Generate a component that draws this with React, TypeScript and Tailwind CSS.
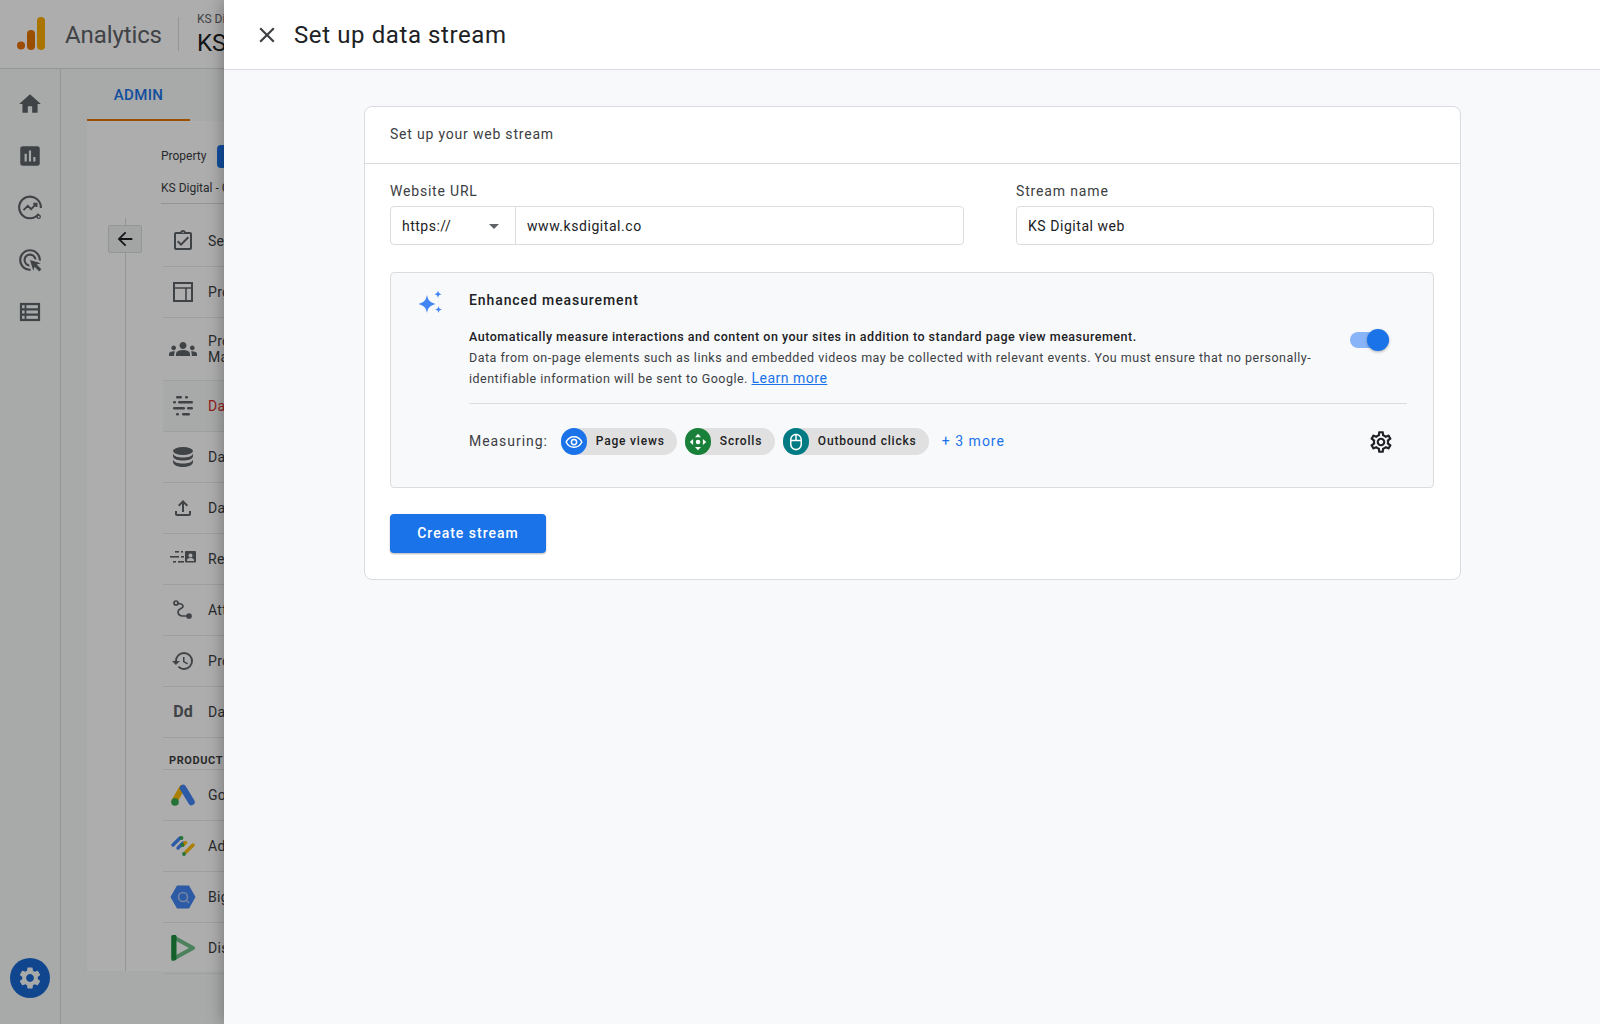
import type { ReactNode } from "react";
import {
  MdHome,
  MdAssessment,
  MdAdsClick,
  MdSettings,
  MdOutlineAssignmentTurnedIn,
  MdGroups,
  MdOutlineFileUpload,
  MdHistory,
  MdArrowBack,
  MdClose,
  MdArrowDropDown,
  MdOutlineSettings,
  MdOutlineMouse,
} from "react-icons/md";

const AnalyticsLogo = () => (
  <svg width="30" height="34" viewBox="0 0 30 34">
    <circle cx="5" cy="28.500" r="4" fill="#E8710A" />
    <rect x="11" y="13" width="8" height="20" rx="4" fill="#E37400" />
    <rect x="21" y="0" width="8" height="33" rx="4" fill="#F9AB00" />
  </svg>
);

const ExploreIcon = () => (
  <svg width="26" height="26" viewBox="0 0 24 24" fill="none" stroke="#5f6368" strokeWidth="2">
    <path d="M20 17.500A10 10 0 1 1 22 12" />
    <path d="M6 14l4-4 3 3 5-5M15 8h3v3" strokeWidth="1.800" />
    <circle cx="20" cy="20" r="1.500" strokeWidth="1.200" />
  </svg>
);

const TableIcon = () => (
  <svg width="26" height="26" viewBox="0 0 26 26" fill="none" stroke="#5f6368" strokeWidth="2.200">
    <rect x="4" y="5" width="18" height="16" />
    <path d="M4 10.300h18M4 15.600h18" />
    <path d="M8.500 5v16" strokeWidth="1.800" />
  </svg>
);

const LayoutIcon = () => (
  <svg width="20" height="20" viewBox="0 0 20 20" fill="none" stroke="#5f6368" strokeWidth="2">
    <rect x="1" y="1" width="18" height="18" />
    <path d="M1 6h18M13 6v13" strokeWidth="1.600" />
  </svg>
);

const StreamsIcon = () => (
  <svg width="20" height="20" viewBox="0 0 20 20" fill="#5f6368">
    <rect x="3" y="0" width="6" height="2.600" rx="1.300" />
    <rect x="12" y="0" width="3" height="2.600" rx="1.300" />
    <rect x="0" y="5" width="3" height="2.600" rx="1.300" />
    <rect x="5" y="5" width="15" height="2.600" rx="1.300" />
    <rect x="0" y="11" width="12" height="2.600" rx="1.300" />
    <rect x="14" y="11" width="6" height="2.600" rx="1.300" />
    <rect x="3" y="17" width="3" height="2.600" rx="1.300" />
    <rect x="9" y="17" width="8" height="2.600" rx="1.300" />
  </svg>
);

const DatabaseIcon = () => (
  <svg width="20" height="20" viewBox="0 0 20 20" fill="#5f6368">
    <ellipse cx="10" cy="4" rx="10" ry="4" />
    <path d="M0 6.500c1 3 5 4 10 4s9-1 10-4v3c-1 3-5 4-10 4s-9-1-10-4zM0 12.500c1 3 5 4 10 4s9-1 10-4v3c-1 3-5 4.500-10 4.500s-9-1.500-10-4.500z" />
  </svg>
);

const IdentityIcon = () => (
  <svg width="26" height="18" viewBox="0 0 26 18" fill="#5f6368">
    <rect x="5" y="1" width="4" height="1.600" />
    <rect x="11" y="1" width="2" height="1.600" />
    <rect x="0" y="6" width="9" height="1.600" />
    <rect x="11" y="6" width="3" height="1.600" />
    <rect x="3" y="11" width="3" height="1.600" />
    <rect x="8" y="11" width="6" height="1.600" />
    <path
      d="M16 1h9a1 1 0 0 1 1 1v9.500a1 1 0 0 1-1 1h-9a1 1 0 0 1-1-1V2a1 1 0 0 1 1-1zm4.500 2.500a2 2 0 1 0 0 4 2 2 0 0 0 0-4zM17 11h7v-1c0-1.500-2.300-2-3.500-2S17 8.500 17 10z"
      fillRule="evenodd"
    />
  </svg>
);

const AttributionIcon = () => (
  <svg width="20" height="20" viewBox="0 0 20 20" fill="none" stroke="#5f6368" strokeWidth="1.700">
    <circle cx="3" cy="3" r="2" />
    <path d="M5 3.500c4 0 5 1 5 3s-5 2-5 5 2 4.500 5 4.500h4" />
    <circle cx="16" cy="16" r="2" fill="#5f6368" />
  </svg>
);

const AdsLogo = () => (
  <svg width="24" height="22" viewBox="0 0 24 22">
    <path d="M11 4L3.500 17" stroke="#FBBC04" strokeWidth="6" strokeLinecap="round" />
    <path d="M12 4l8.500 14" stroke="#4285F4" strokeWidth="6.500" strokeLinecap="round" />
    <circle cx="4" cy="18" r="3.800" fill="#34A853" />
  </svg>
);

const AdManagerLogo = () => (
  <svg width="24" height="24" viewBox="0 0 24 24" strokeLinecap="round" strokeWidth="3.400">
    <path d="M2 11l7-7" stroke="#4285F4" />
    <path d="M7 14l5-5" stroke="#4285F4" />
    <path d="M12 11l2.500-2.500" stroke="#FBBC04" />
    <path d="M15 18l7-7" stroke="#FBBC04" />
    <circle cx="10.500" cy="4" r="1.900" fill="#34A853" stroke="none" />
    <circle cx="11.500" cy="11" r="1.900" fill="#34A853" stroke="none" />
    <circle cx="13" cy="20" r="1.900" fill="#34A853" stroke="none" />
  </svg>
);

const BigQueryLogo = () => (
  <svg width="26" height="24" viewBox="0 0 26 24">
    <path d="M7 0.500h12l6.500 11.500L19 23.500H7L0.500 12z" fill="#4285F4" />
    <circle cx="13" cy="12" r="4.500" fill="none" stroke="#a9c4f5" strokeWidth="1.600" />
    <path d="M16 15l3 3" stroke="#a9c4f5" strokeWidth="1.600" />
  </svg>
);

const DisplayLogo = () => (
  <svg width="24" height="26" viewBox="0 0 24 26">
    <path d="M2 2l20 11L2 24z" fill="none" stroke="#6fc08a" strokeWidth="4" strokeLinejoin="round" />
    <path d="M3 2v21" stroke="#1E8E3E" strokeWidth="5" strokeLinecap="round" />
  </svg>
);

const Sparkles = () => (
  <svg width="28" height="28" viewBox="0 0 28 28" fill="#4285f4">
    <path d="M10 6c1.100 5.400 2.700 7 8.500 9-5.800 2-7.400 3.600-8.500 9-1.100-5.400-2.700-7-8.500-9 5.800-2 7.400-3.600 8.500-9z" />
    <path d="M21 1.500c.5 2.500 1.200 3.200 3.700 3.700-2.500.5-3.200 1.200-3.700 3.700-.5-2.500-1.200-3.200-3.700-3.700 2.500-.5 3.200-1.200 3.700-3.700z" />
    <path d="M21.500 17c.5 2.400 1.100 3 3.500 3.500-2.400.5-3 1.100-3.500 3.500-.5-2.400-1.100-3-3.500-3.500 2.400-.5 3-1.100 3.500-3.500z" />
  </svg>
);

const EyeIcon = () => (
  <svg width="18" height="18" viewBox="0 0 24 24" fill="none" stroke="white" strokeWidth="2">
    <path d="M1.500 12C4 7 8 5 12 5s8 2 10.500 7C20 17 16 19 12 19s-8-2-10.500-7z" />
    <circle cx="12" cy="12" r="3.500" />
  </svg>
);

const ScrollIcon = () => (
  <svg width="18" height="18" viewBox="0 0 24 24" fill="white">
    <path d="M12 1l4 4.500H8zM12 23l-4-4.500h8zM1 12l4.500-4v8zM23 12l-4.500 4V8z" />
    <circle cx="12" cy="12" r="3" />
  </svg>
);

type NavRow = { icon: ReactNode; label: string; active?: boolean; tall?: boolean };

const rows: NavRow[] = [
  { icon: <MdOutlineAssignmentTurnedIn size={24} color="#5f6368" />, label: "Setup Assistant" },
  { icon: <LayoutIcon />, label: "Property Settings" },
  { icon: <MdGroups size={28} color="#5f6368" />, label: "Property Access Management", tall: true },
  { icon: <StreamsIcon />, label: "Data Streams", active: true },
  { icon: <DatabaseIcon />, label: "Data Settings" },
  { icon: <MdOutlineFileUpload size={24} color="#5f6368" />, label: "Data Import" },
  { icon: <IdentityIcon />, label: "Reporting Identity" },
  { icon: <AttributionIcon />, label: "Attribution Settings" },
  { icon: <MdHistory size={24} color="#5f6368" />, label: "Property Change History" },
  { icon: <span className="text-[16px] font-bold text-[#5f6368]">Dd</span>, label: "Data Deletion Requests" },
];

const links: NavRow[] = [
  { icon: <AdsLogo />, label: "Google Ads Links" },
  { icon: <AdManagerLogo />, label: "Ad Manager Links" },
  { icon: <BigQueryLogo />, label: "BigQuery Links" },
  { icon: <DisplayLogo />, label: "Display & Video 360 Links" },
];

const Row = ({ row }: { row: NavRow }) => (
  <div
    className={`flex items-center border-b border-[#e8eaed] ${row.tall ? "h-[63px]" : "h-[51px]"} ${
      row.active ? "bg-[#f8f9fa]" : ""
    }`}
  >
    <div className="flex w-[45px] shrink-0 justify-center pr-[5px]">{row.icon}</div>
    <span
      className={`text-[14px] leading-[16px] tracking-[0.3px] ${row.tall ? "w-[130px]" : "whitespace-nowrap"} ${
        row.active ? "text-[#d93025]" : "text-[#3c4043]"
      }`}
    >
      {row.label}
    </span>
  </div>
);

const Chip = ({ icon, color, label, width }: { icon: ReactNode; color: string; label: string; width: string }) => (
  <div className={`flex h-[27px] items-center rounded-full bg-[#e0e0e0] ${width}`}>
    <div className={`flex h-[27px] w-[26px] shrink-0 items-center justify-center rounded-full ${color}`}>{icon}</div>
    <span className="mb-[1px] ml-[9px] whitespace-nowrap text-[12px] font-medium tracking-[0.8px] text-[#202124]">
      {label}
    </span>
  </div>
);

const BackgroundPage = () => (
  <div className="relative h-full w-[224px] shrink-0 overflow-hidden bg-[#f8f9fa] font-['Roboto',sans-serif]">
    <div className="flex h-[69px] w-[500px] items-center border-b border-[#dadce0] bg-white pl-[16px]">
      <AnalyticsLogo />
      <span className="ml-[19px] pt-[2px] text-[24px] tracking-[-0.1px] text-[#5f6368]">Analytics</span>
      <div className="ml-[16px] h-[34px] w-px bg-[#dadce0]" />
      <div className="ml-[18px] flex flex-col">
        <span className="text-[12px] leading-[14px] text-[#5f6368]">KS Digital</span>
        <span className="pt-[3px] text-[24px] leading-[28px] text-[#202124]">KS Digital</span>
      </div>
    </div>
    <div className="flex h-[955px]">
      <div className="flex w-[61px] shrink-0 flex-col items-center justify-between border-r border-[#dadce0] pb-[26px] pt-[22px]">
        <div className="flex flex-col items-center gap-[26px]">
          <MdHome size={26} color="#5f6368" />
          <MdAssessment size={26} color="#5f6368" />
          <ExploreIcon />
          <MdAdsClick size={26} color="#5f6368" />
          <TableIcon />
        </div>
        <div className="flex h-[40px] w-[40px] items-center justify-center rounded-full bg-[#1967d2]">
          <MdSettings size={26} color="#f8f9fa" />
        </div>
      </div>
      <div className="pl-[26px]">
        <div className="flex h-[52px] w-[103px] items-center justify-center border-b-2 border-[#e37400] pt-[2px] text-[15px] font-medium tracking-[0.4px] text-[#1a73e8]">
          ADMIN
        </div>
        <div className="relative h-[850px] w-[400px] bg-white pl-[74px]">
          <div className="flex h-[50px] items-center gap-[11px] pt-[20px]">
            <span className="text-[12px] text-[#3c4043]">Property</span>
            <div className="h-[23px] w-[60px] rounded-[4px] bg-[#1a73e8]" />
          </div>
          <div className="flex h-[33px] w-[200px] items-start border-b border-[#dadce0] pt-[8px] text-[12px] text-[#3c4043]">
            KS Digital - GA4
          </div>
          <div className="absolute bottom-0 left-[38px] top-[97px] w-px bg-[#dadce0]" />
          <div className="absolute left-[21px] top-[104px] flex h-[28px] w-[34px] items-center justify-center rounded-[2px] border border-[#dadce0] bg-[#f1f3f4]">
            <MdArrowBack size={22} color="#202124" />
          </div>
          <div className="ml-[2px] mt-[12px] w-[240px]">
            {rows.map((row) => (
              <Row key={row.label} row={row} />
            ))}
            <div className="flex h-[32px] items-end border-b border-[#e8eaed] pl-[6px] text-[11px] font-bold tracking-[0.6px] text-[#3c4043]">
              PRODUCT LINKS
            </div>
            {links.map((row) => (
              <Row key={row.label} row={row} />
            ))}
          </div>
        </div>
      </div>
    </div>
    {/* scrim over the page behind the panel */}
    <div className="absolute inset-0 bg-black/32" />
  </div>
);

export default function App() {
  return (
    <div className="flex h-screen w-full overflow-hidden bg-[#f8f9fa] font-['Roboto',sans-serif]">
      <BackgroundPage />
      <div className="relative z-10 flex min-w-0 flex-1 flex-col bg-[#f8f9fb] shadow-[0_0_16px_rgba(0,0,0,0.35)]">
        <div className="flex h-[70px] shrink-0 items-center border-b border-[#dadce0] bg-white pl-[30px]">
          <MdClose size={26} color="#3c4043" />
          <h1 className="ml-[14px] text-[24px] tracking-[0.6px] text-[#202124]">Set up data stream</h1>
        </div>
        <div className="px-[140px] pt-[36px]">
          <div className="h-[474px] w-[1097px] rounded-[8px] border border-[#dadce0] bg-white">
            <div className="flex h-[57px] items-center border-b border-[#dadce0] px-[25px] pb-[2px] text-[14px] tracking-[0.8px] text-[#3c4043]">
              Set up your web stream
            </div>
            <div className="px-[25px]">
              <div className="mt-[17px] flex gap-[52px]">
                <div className="w-[574px]">
                  <div className="h-[25px] text-[14px] leading-[20px] tracking-[0.8px] text-[#3c4043]">Website URL</div>
                  <div className="flex h-[39px] items-center rounded-[4px] border border-[#dadce0] bg-white text-[14px] text-[#202124]">
                    <div className="flex h-full w-[125px] items-center justify-between border-r border-[#dadce0] pl-[11px] pr-[9px] pt-[1px]">
                      <span className="tracking-[0.5px]">https://</span>
                      <MdArrowDropDown size={24} color="#5f6368" />
                    </div>
                    <span className="ml-[11px] pt-[1px] tracking-[0.55px]">www.ksdigital.co</span>
                  </div>
                </div>
                <div className="w-[418px]">
                  <div className="h-[25px] text-[14px] leading-[20px] tracking-[0.85px] text-[#3c4043]">Stream name</div>
                  <div className="flex h-[39px] items-center rounded-[4px] border border-[#dadce0] bg-white pl-[11px] pt-[1px] text-[14px] tracking-[0.55px] text-[#202124]">
                    KS Digital web
                  </div>
                </div>
              </div>

              <div className="mt-[27px] h-[216px] w-[1044px] rounded-[4px] border border-[#dadce0] bg-[#f8f9fb]">
                <div className="flex">
                  <div className="flex w-[78px] shrink-0 justify-center pl-[2px] pt-[16px]">
                    <Sparkles />
                  </div>
                  <div className="w-[938px]">
                    <div className="flex h-[53px] items-center pt-[2px] text-[14px] font-medium tracking-[0.9px] text-[#202124]">
                      Enhanced measurement
                    </div>
                    <div className="flex justify-between border-b border-[#dadce0] pb-[14px] pr-[18px]">
                      <div className="w-[850px] text-[12.500px] leading-[21px] tracking-[0.5px] text-[#3c4043]">
                        <div className="font-medium text-[#202124]">
                          Automatically measure interactions and content on your sites in addition to standard page view
                          measurement.
                        </div>
                        <div>
                          Data from on-page elements such as links and embedded videos may be collected with relevant
                          events. You must ensure that no personally-identifiable information will be sent to Google.{" "}
                          <span className="text-[14px] leading-[16px] text-[#1a73e8] underline">Learn more</span>
                        </div>
                      </div>
                      <div className="relative mt-[6px] h-[16px] w-[39px] rounded-full bg-[#8ab4f8]">
                        <div className="absolute -top-[3px] right-0 h-[22px] w-[22px] rounded-full bg-[#1a73e8] shadow-[0_1px_3px_rgba(0,0,0,0.3)]" />
                      </div>
                    </div>
                    <div className="flex h-[75px] items-center">
                      <span className="mr-[13px] text-[14px] tracking-[0.95px] text-[#3c4043]">Measuring:</span>
                      <div className="flex gap-[8px]">
                        <Chip icon={<EyeIcon />} color="bg-[#1a73e8]" label="Page views" width="w-[116px]" />
                        <Chip icon={<ScrollIcon />} color="bg-[#188038]" label="Scrolls" width="w-[90px]" />
                        <Chip
                          icon={<MdOutlineMouse size={18} color="white" />}
                          color="bg-[#007b83]"
                          label="Outbound clicks"
                          width="w-[146px]"
                        />
                      </div>
                      <span className="ml-[13px] text-[14px] tracking-[1px] text-[#1a73e8]">+ 3 more</span>
                      <div className="ml-auto mr-[13px]">
                        <MdOutlineSettings size={26} color="#202124" />
                      </div>
                    </div>
                  </div>
                </div>
              </div>

              <button className="mt-[26px] h-[39px] w-[156px] rounded-[4px] bg-[#1a73e8] text-[14px] font-medium tracking-[1px] text-white shadow-[0_1px_2px_rgba(0,0,0,0.3)]">
                Create stream
              </button>
            </div>
          </div>
        </div>
      </div>
    </div>
  );
}
